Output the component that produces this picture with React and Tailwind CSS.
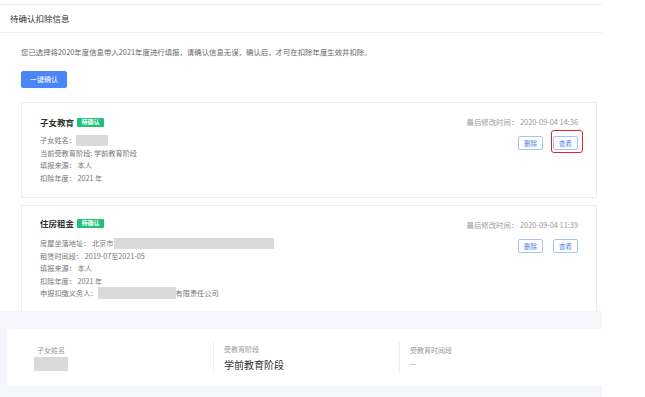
import React from 'react'

function Tag() {
  return (
    <span className="ml-[3px] inline-flex h-[9px] w-[27px] items-center justify-center rounded-[1px] bg-[#1ec37a] text-[6px] leading-none text-white">
      待确认
    </span>
  )
}

function Gray({ w, h = 11 }) {
  return <span className="inline-block bg-[#dadada] align-middle" style={{ width: w, height: h }} />
}

function ActionButtons({ marked }) {
  return (
    <div className="mt-[8px] flex justify-end gap-[10px]">
      <button className="flex h-[14px] w-[25px] items-center justify-center rounded-[2px] border border-[#a9c2f3] text-[6.5px] leading-none text-[#4a7ee8]">
        删除
      </button>
      <div className="relative">
        <button className="flex h-[14px] w-[25px] items-center justify-center rounded-[2px] border border-[#a9c2f3] text-[6.5px] leading-none text-[#4a7ee8]">
          查看
        </button>
        {marked && (
          <span className="pointer-events-none absolute -top-[6px] -bottom-[3px] -left-[2px] -right-[4.5px] rounded-[3px] border-[1.5px] border-[#e3262b]" />
        )}
      </div>
    </div>
  )
}

export default function App() {
  return (
    <div className="h-[397px] w-[645px] overflow-hidden bg-white font-['Noto_Sans_CJK_SC',sans-serif]">
      <div className="flex h-full w-[602px] flex-col">
        <div className="h-[4px] shrink-0" />

        {/* 待确认扣除信息 */}
        <section className="h-[307px] shrink-0 overflow-hidden border-t border-[#efefef] bg-white">
          <div className="flex h-[28px] items-center border-b border-[#efefef] pl-[10px] text-[8.5px] text-[#333]">
            待确认扣除信息
          </div>

          <div className="pl-[21px] pr-[5px]">
            <p className="pt-[13px] text-[7.4px] leading-[12px] text-[#666]">
              您已选择将2020年度信息带入2021年度进行填报，请确认信息无误，确认后，才可在扣除年度生效并扣除。
            </p>
            <button className="mt-[13px] flex h-[17px] w-[46px] items-center justify-center rounded-[2px] bg-[#4a86f7] text-[7px] leading-none text-white">
              一键确认
            </button>

            {/* 子女教育 */}
            <div className="mt-[14px] flex h-[96px] justify-between border border-[#ececec] pl-[18px] pr-[18px]">
              <div className="pt-[13px]">
                <div className="flex h-[12px] items-center text-[8.5px] font-bold text-[#333]">
                  子女教育
                  <Tag />
                </div>
                <div className="mt-[6px] text-[7.2px] leading-[12.7px] text-[#777]">
                  <div className="flex items-center">
                    子女姓名：<Gray w={32} />
                  </div>
                  <div>当前受教育阶段: 学前教育阶段</div>
                  <div>填报来源： 本人</div>
                  <div>扣除年度： 2021 年</div>
                </div>
              </div>
              <div className="pt-[13px]">
                <div className="h-[12px] text-right text-[7.4px] leading-[12px] text-[#999]">
                  最后修改时间： 2020-09-04 14:36
                </div>
                <ActionButtons marked />
              </div>
            </div>

            {/* 住房租金 */}
            <div className="mt-[7px] flex h-[120px] justify-between border border-[#ececec] pl-[18px] pr-[18px]">
              <div className="pt-[11px]">
                <div className="flex h-[12px] items-center text-[8.5px] font-bold text-[#333]">
                  住房租金
                  <Tag />
                </div>
                <div className="mt-[8px] text-[7.2px] leading-[12.5px] text-[#777]">
                  <div className="flex items-center">
                    房屋坐落地址： 北京市<Gray w={160} />
                  </div>
                  <div>租赁时间段： 2019-07至2021-05</div>
                  <div>填报来源： 本人</div>
                  <div>扣除年度： 2021 年</div>
                  <div className="flex items-center">
                    申报扣缴义务人：<Gray w={78} h={12} />
                    有限责任公司
                  </div>
                </div>
              </div>
              <div className="pt-[13px]">
                <div className="h-[12px] text-right text-[7.4px] leading-[12px] text-[#999]">
                  最后修改时间： 2020-09-04 11:39
                </div>
                <ActionButtons />
              </div>
            </div>
          </div>
        </section>

        {/* 详情 */}
        <div className="flex-1 bg-[#f5f6fa] pl-[7px] pt-[18px]">
          <div className="flex h-[57px] items-center bg-white">
            <div className="h-[32px] w-[206px] pl-[27px] pt-[3px]">
              <div className="ml-[3px] text-[7px] leading-[10px] text-[#999]">子女姓名</div>
              <div className="mt-[2px] h-[14px] w-[34px] bg-[#dadada]" />
            </div>
            <div className="h-[32px] w-[186px] border-l border-[#eeeeee] pl-[10px] pt-[2px]">
              <div className="text-[7px] leading-[10px] text-[#999]">受教育阶段</div>
              <div className="mt-[4px] text-[10px] leading-[14px] text-[#333]">学前教育阶段</div>
            </div>
            <div className="h-[32px] flex-1 border-l border-[#eeeeee] pl-[10px] pt-[3px]">
              <div className="text-[7px] leading-[10px] text-[#999]">受教育时间段</div>
              <div className="mt-[3px] text-[9px] leading-[12px] text-[#999]">--</div>
            </div>
          </div>
        </div>
      </div>
    </div>
  )
}
